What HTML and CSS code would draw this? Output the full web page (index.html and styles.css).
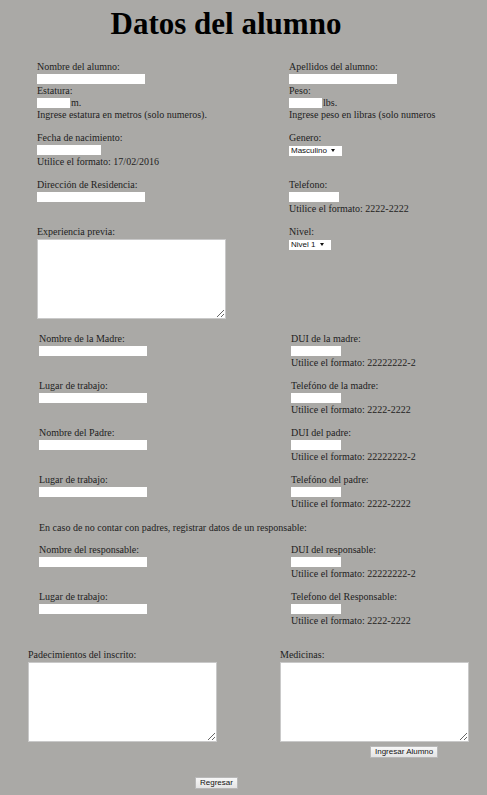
FILE: index.html
```html
<!DOCTYPE html>
<html lang="es">
<head>
<meta charset="utf-8">
<title>Datos del alumno</title>
<link rel="stylesheet" href="styles.css">
</head>
<body>
<h1 class="title">Datos del alumno</h1>

<form class="form">
  <div class="section s1">
    <div class="field">
      <label class="lbl">Nombre del alumno:</label>
      <input class="in in-long" type="text">
      <label class="lbl">Estatura:</label>
      <div class="inline"><input class="in in-xs" type="text"><span>m.</span></div>
      <p class="note">Ingrese estatura en metros (solo numeros).</p>
    </div>
    <div class="field">
      <label class="lbl">Apellidos del alumno:</label>
      <input class="in in-long" type="text">
      <label class="lbl">Peso:</label>
      <div class="inline"><input class="in in-xs" type="text"><span>lbs.</span></div>
      <p class="note">Ingrese peso en libras (solo numeros</p>
    </div>

    <div class="field">
      <label class="lbl">Fecha de nacimiento:</label>
      <input class="in in-date" type="text">
      <p class="note">Utilice el formato: 17/02/2016</p>
    </div>
    <div class="field">
      <label class="lbl">Genero:</label>
      <span class="sel sel-gen"><select><option>Masculino</option><option>Femenino</option></select></span>
    </div>

    <div class="field">
      <label class="lbl">Dirección de Residencia:</label>
      <input class="in in-long" type="text">
    </div>
    <div class="field">
      <label class="lbl">Telefono:</label>
      <input class="in in-short" type="text">
      <p class="note">Utilice el formato: 2222-2222</p>
    </div>

    <div class="field">
      <label class="lbl">Experiencia previa:</label>
      <textarea class="ta"></textarea>
    </div>
    <div class="field">
      <label class="lbl">Nivel:</label>
      <span class="sel sel-niv"><select><option>Nivel 1</option><option>Nivel 2</option></select></span>
    </div>
  </div>

  <div class="section s2">
    <div class="field">
      <label class="lbl">Nombre de la Madre:</label>
      <input class="in in-long" type="text">
    </div>
    <div class="field">
      <label class="lbl">DUI de la madre:</label>
      <input class="in in-short" type="text">
      <p class="note">Utilice el formato: 22222222-2</p>
    </div>

    <div class="field">
      <label class="lbl">Lugar de trabajo:</label>
      <input class="in in-long" type="text">
    </div>
    <div class="field">
      <label class="lbl">Telefóno de la madre:</label>
      <input class="in in-short" type="text">
      <p class="note">Utilice el formato: 2222-2222</p>
    </div>

    <div class="field">
      <label class="lbl">Nombre del Padre:</label>
      <input class="in in-long" type="text">
    </div>
    <div class="field">
      <label class="lbl">DUI del padre:</label>
      <input class="in in-short" type="text">
      <p class="note">Utilice el formato: 22222222-2</p>
    </div>

    <div class="field">
      <label class="lbl">Lugar de trabajo:</label>
      <input class="in in-long" type="text">
    </div>
    <div class="field">
      <label class="lbl">Telefóno del padre:</label>
      <input class="in in-short" type="text">
      <p class="note">Utilice el formato: 2222-2222</p>
    </div>
  </div>

  <p class="note s2-note">En caso de no contar con padres, registrar datos de un responsable:</p>

  <div class="section s2b">
    <div class="field">
      <label class="lbl">Nombre del responsable:</label>
      <input class="in in-long" type="text">
    </div>
    <div class="field">
      <label class="lbl">DUI del responsable:</label>
      <input class="in in-short" type="text">
      <p class="note">Utilice el formato: 22222222-2</p>
    </div>

    <div class="field">
      <label class="lbl">Lugar de trabajo:</label>
      <input class="in in-long" type="text">
    </div>
    <div class="field">
      <label class="lbl">Telefono del Responsable:</label>
      <input class="in in-short" type="text">
      <p class="note">Utilice el formato: 2222-2222</p>
    </div>
  </div>

  <div class="section s3">
    <div class="field">
      <label class="lbl">Padecimientos del inscrito:</label>
      <textarea class="ta"></textarea>
    </div>
    <div class="field">
      <label class="lbl">Medicinas:</label>
      <textarea class="ta"></textarea>
      <button type="button" class="btn btn-ingresar">Ingresar Alumno</button>
    </div>
  </div>

  <div class="back">
    <button type="button" class="btn">Regresar</button>
  </div>
</form>
</body>
</html>
```

FILE: styles.css
```css
* { box-sizing: border-box; }

html, body {
  margin: 0;
  padding: 0;
  background: #aaa9a6;
}

body {
  font-family: "Liberation Serif", "Times New Roman", serif;
  font-size: 10px;
  color: #222;
  width: 487px;
  height: 795px;
  overflow: hidden;
}

.title {
  margin: 6px 0 0 0;
  width: 452px;
  text-align: center;
  font-size: 31px;
  line-height: 36px;
  font-weight: bold;
  color: #000;
}

.form { margin: 0; }

.section {
  display: grid;
  grid-template-columns: 252px 1fr;
  row-gap: 11px;
  align-items: start;
}

.s1 { margin-top: 19px; padding-left: 37px; }
.s2 { margin-top: 14px; padding-left: 39px; }
.s2b { margin-top: 10px; padding-left: 39px; }
.s3 { margin-top: 22px; padding-left: 28px; }

.field {
  display: flex;
  flex-direction: column;
  align-items: flex-start;
}

.lbl,
.note {
  display: block;
  margin: 0;
  line-height: 12px;
  height: 12px;
  white-space: nowrap;
}

.s2-note {
  margin-top: 12px;
  padding-left: 39px;
}

.in {
  display: block;
  height: 10px;
  margin: 1px 0;
  padding: 0;
  border: none;
  background: #fff;
  font-size: 8px;
}

.in-long { width: 108px; }
.in-date { width: 64px; }
.in-short { width: 50px; }
.in-xs { width: 33px; }

.inline {
  display: flex;
  align-items: center;
  height: 12px;
}

.inline span {
  margin-left: 1px;
  line-height: 12px;
}

.sel {
  position: relative;
  display: block;
  height: 10px;
  margin: 2px 0 0 0;
  background: #fff;
}

.sel select {
  appearance: none;
  -webkit-appearance: none;
  display: block;
  width: 100%;
  height: 10px;
  border: none;
  background: transparent;
  padding: 0 0 0 2px;
  margin: 0;
  font-family: "Liberation Sans", Arial, sans-serif;
  font-size: 8px;
  line-height: 10px;
  color: #111;
}

.sel::after {
  content: "";
  position: absolute;
  top: 3px;
  right: 7px;
  border-left: 2px solid transparent;
  border-right: 2px solid transparent;
  border-top: 3px solid #111;
  pointer-events: none;
}

.sel-gen { width: 53px; }
.sel-niv { width: 42px; }

.ta {
  display: block;
  width: 189px;
  height: 80px;
  margin: 1px 0 0 0;
  padding: 0;
  border: 1px solid #c9c9c9;
  background: #fff;
  font-family: "Liberation Serif", serif;
  font-size: 10px;
}

.btn {
  display: block;
  height: 12px;
  padding: 0 4px;
  margin: 0;
  border: 1px solid #b8b8b8;
  background: linear-gradient(#f7f7f7, #e4e4e4);
  font-family: "Liberation Sans", Arial, sans-serif;
  font-size: 8px;
  line-height: 10px;
  color: #111;
}

.btn-ingresar {
  margin-top: 4px;
  margin-left: 90px;
}

.back {
  display: flex;
  padding-left: 195px;
  margin-top: 19px;
}
```
